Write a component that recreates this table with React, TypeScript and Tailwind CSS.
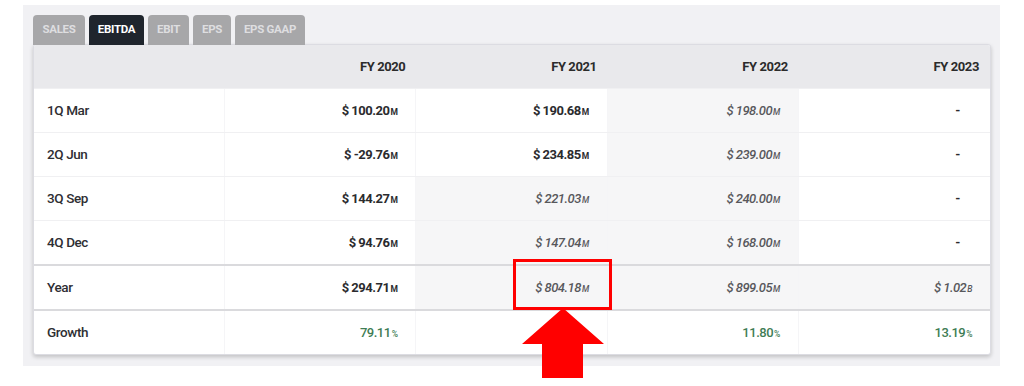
import React from "react";

type Cell = { v: string; s?: string; est?: boolean; green?: boolean; dash?: boolean } | null;

const rows: { label: string; cells: Cell[]; kind?: "year" | "growth" }[] = [
  {
    label: "1Q Mar",
    cells: [
      { v: "$ 100.20", s: "M" },
      { v: "$ 190.68", s: "M" },
      { v: "$ 198.00", s: "M", est: true },
      { v: "-", dash: true },
    ],
  },
  {
    label: "2Q Jun",
    cells: [
      { v: "$ -29.76", s: "M" },
      { v: "$ 234.85", s: "M" },
      { v: "$ 239.00", s: "M", est: true },
      { v: "-", dash: true },
    ],
  },
  {
    label: "3Q Sep",
    cells: [
      { v: "$ 144.27", s: "M" },
      { v: "$ 221.03", s: "M", est: true },
      { v: "$ 240.00", s: "M", est: true },
      { v: "-", dash: true },
    ],
  },
  {
    label: "4Q Dec",
    cells: [
      { v: "$ 94.76", s: "M" },
      { v: "$ 147.04", s: "M", est: true },
      { v: "$ 168.00", s: "M", est: true },
      { v: "-", dash: true },
    ],
  },
  {
    label: "Year",
    kind: "year",
    cells: [
      { v: "$ 294.71", s: "M" },
      { v: "$ 804.18", s: "M", est: true },
      { v: "$ 899.05", s: "M", est: true },
      { v: "$ 1.02", s: "B", est: true },
    ],
  },
  {
    label: "Growth",
    kind: "growth",
    cells: [
      { v: "79.11", s: "%", green: true },
      null,
      { v: "11.80", s: "%", green: true },
      { v: "13.19", s: "%", green: true },
    ],
  },
];

const tabs: { t: string; w: string }[] = [
  { t: "SALES", w: "w-[52px]" },
  { t: "EBITDA", w: "w-[55px]" },
  { t: "EBIT", w: "w-[41px]" },
  { t: "EPS", w: "w-[38px]" },
  { t: "EPS GAAP", w: "w-[70px]" },
];

export default function App() {
  return (
    <div
      className="relative w-[1024px] h-[386px] bg-white overflow-hidden"
      style={{ fontFamily: "Roboto, 'Liberation Sans', sans-serif" }}
    >
      <div className="ml-[23px] mt-[5px] w-[977px] h-[361px] bg-[#f1f1f4] pl-[10px] pt-[10px]">
        <div className="flex gap-[4px] h-[30px]">
          {tabs.map(({ t, w }) => (
            <div
              key={t}
              className={
                w +
                " h-[30px] rounded-t-[4px] flex items-center justify-center text-[11.5px] font-bold tracking-[-0.3px] " +
                (t === "EBITDA"
                  ? "bg-[#1f252d] text-white"
                  : "bg-[#a7a7a9] text-[#dedee0]")
              }
            >
              {t}
            </div>
          ))}
        </div>
        <div className="w-[958px] -mt-px bg-white rounded-[3px] border border-[#dcdce2] shadow-[0_2px_4px_rgba(0,0,0,0.2)] overflow-hidden">
          <div className="grid grid-cols-5 h-[43px] bg-[#e9e9ec] items-center text-[13px] font-bold text-[#2b2b2b] tracking-[-0.4px]">
            <div />
            {["FY 2020", "FY 2021", "FY 2022", "FY 2023"].map((h) => (
              <div key={h} className="text-right pr-[11px]">
                {h}
              </div>
            ))}
          </div>
          {rows.map((r) => (
            <div
              key={r.label}
              className={
                "grid grid-cols-5 " +
                (r.kind ? "h-[45px] border-t-2 border-[#dadadd]" : "h-[44px] border-t border-[#f0f0f2]")
              }
            >
              <div className="flex items-center pl-[13px] text-[13.5px] font-medium text-[#2e2e33] tracking-[-0.4px] border-r border-[#f5f5f7]">
                {r.label}
              </div>
              {r.cells.map((c, i) => (
                <div
                  key={i}
                  className={
                    "flex items-center justify-end border-r border-[#f5f5f7] last:border-r-0 " +
                    (c && c.est ? "bg-[#f6f6f7] " : "") +
                    (c && c.dash ? "pr-[30px]" : "pr-[18px]")
                  }
                >
                  {c && (
                    <span
                      className={
                        "text-[13px] tracking-[-0.5px] " +
                        (c.est
                          ? "italic text-[#58585c] font-medium"
                          : c.green
                          ? "text-[#3f7d55] font-medium"
                          : "text-[#2b2b2e] font-bold")
                      }
                    >
                      {c.v}
                      {c.s && <span className="text-[8.5px] ml-[1px]">{c.s}</span>}
                    </span>
                  )}
                </div>
              ))}
            </div>
          ))}
        </div>
      </div>

      {/* red highlight box */}
      <div className="absolute left-[513px] top-[259px] w-[99px] h-[51px] border-[3px] border-[#ff0000]" />

      {/* red arrow */}
      <svg className="absolute left-[520px] top-[308px]" width="86" height="72" viewBox="0 0 86 72">
        <polygon points="43,0 84,36 63,36 63,70 22,70 22,36 2,36" fill="#ff0000" />
      </svg>
    </div>
  );
}
